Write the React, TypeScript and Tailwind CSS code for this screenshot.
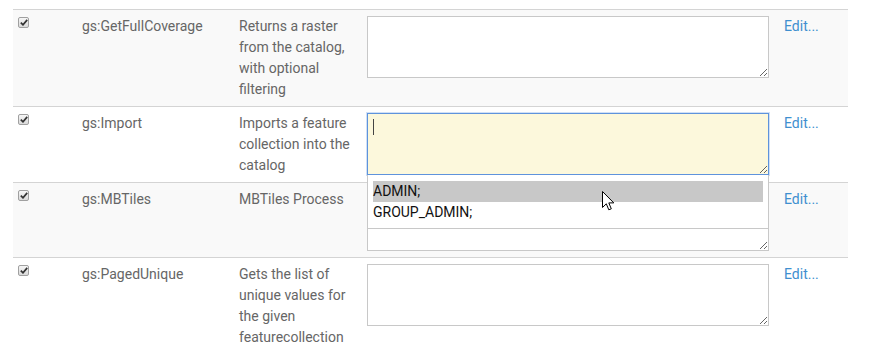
import React from "react";

type Row = { name: string; desc: string; striped: boolean; focused?: boolean };

const rows: Row[] = [
  { name: "gs:GetFullCoverage", desc: "Returns a raster from the catalog, with optional filtering", striped: true },
  { name: "gs:Import", desc: "Imports a feature collection into the catalog", striped: false, focused: true },
  { name: "gs:MBTiles", desc: "MBTiles Process", striped: true },
  { name: "gs:PagedUnique", desc: "Gets the list of unique values for the given featurecollection", striped: false },
];

function Check() {
  return (
    <div className="mt-[1px] flex h-[11px] w-[11px] items-center justify-center rounded-[2px] border border-[#a0a0a0] bg-gradient-to-b from-[#f6f6f6] to-[#dadada]">
      <svg width="8" height="7" viewBox="0 0 8 7">
        <path d="M0.8 3.6 L3 5.8 L7.2 0.9" fill="none" stroke="#333" strokeWidth="1.7" />
      </svg>
    </div>
  );
}

function Cursor() {
  return (
    <svg className="absolute left-[234px] top-[16px]" width="13" height="21" viewBox="0 0 13 21">
      <path
        d="M0.5 0.5 L0.5 16.5 L4.3 12.8 L6.8 18.8 L9.3 17.8 L6.8 11.9 L11.8 11.9 Z"
        fill="#fff"
        stroke="#000"
        strokeWidth="1"
        strokeLinejoin="miter"
      />
    </svg>
  );
}

export default function App() {
  return (
    <div className="h-[350px] w-[874px] overflow-hidden bg-white pt-[9px] font-['Roboto',sans-serif] text-[14px] leading-[21px] text-[#666]">
      <div className="ml-[13px] w-[835px] border-t border-[#d4d4d4]">
        {rows.map((r, i) => (
          <div
            key={i}
            className={`grid grid-cols-[63px_157px_128px_417px_70px] ${i > 0 ? "border-t border-[#d4d4d4]" : ""} ${r.striped ? "bg-[#f9f9f9]" : "bg-white"}`}
          >
            <div className="py-[6px] pl-[5px]">
              <Check />
            </div>
            <div className="py-[6px] pl-[6px]">{r.name}</div>
            <div className="py-[6px] pl-[6px] pr-[6px]">{r.desc}</div>
            <div className="py-[6px] pl-[6px]">
              <div className="relative w-[402px]">
                {r.focused ? (
                  <>
                    <textarea
                      readOnly
                      className="block h-[62px] w-[402px] resize border border-[#5e93dc] bg-[#fcf8dc] shadow-[0_0_0_1px_rgba(120,165,230,0.35)] outline-none"
                    />
                    <span className="absolute left-[6px] top-[6px] h-[16px] w-[1px] bg-[#444]" />
                    <div className="absolute left-0 top-full z-10 w-[402px] border-x border-b border-[#c8c8c8] bg-white px-[5px] pb-[5px] pt-[6px] text-[14px] text-[#111]">
                      <div className="h-[21px] bg-[#c8c8c8] leading-[21px]">ADMIN;</div>
                      <div className="h-[21px] leading-[21px]">GROUP_ADMIN;</div>
                      <Cursor />
                    </div>
                  </>
                ) : (
                  <textarea
                    readOnly
                    className="block h-[62px] w-[402px] resize border border-[#c8c8c8] bg-white outline-none"
                  />
                )}
              </div>
            </div>
            <div className="py-[6px] pl-[6px]">
              <a className="cursor-pointer text-[#3f8fcf]">Edit...</a>
            </div>
          </div>
        ))}
      </div>
    </div>
  );
}
